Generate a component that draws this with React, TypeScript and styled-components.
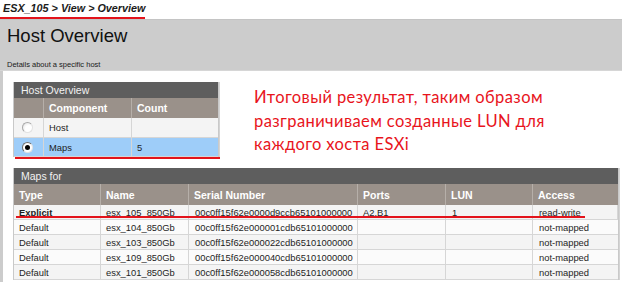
import React from 'react';
import styled, { createGlobalStyle } from 'styled-components';

const Global = createGlobalStyle`
  html, body { margin: 0; padding: 0; background: #ffffff; }
  body {
    width: 622px; height: 282px; overflow: hidden;
    font-family: "Liberation Sans", Arial, Helvetica, sans-serif;
  }
  * { box-sizing: border-box; }
`;

const Page = styled.div`
  width: 622px;
  height: 282px;
  display: flex;
  flex-direction: column;
  overflow: hidden;
`;

const Breadcrumb = styled.div`
  position: relative;
  height: 19px;
  padding: 2px 0 0 3px;
  font-size: 10.8px;
  line-height: 12px;
  font-weight: bold;
  font-style: italic;
  color: #1c1c1c;
`;

const RedMark = styled.div<{ $left: number; $top: number; $width: number }>`
  position: absolute;
  left: ${(p) => p.$left}px;
  top: ${(p) => p.$top}px;
  width: ${(p) => p.$width}px;
  height: 2px;
  background: #e3131b;
  pointer-events: none;
`;

const HeaderBand = styled.div`
  height: 52px;
  background: #cccccc;
  border-top: 1px solid #c4c4c4;
  border-bottom: 1px solid #d6d6d6;
  padding: 6px 0 0 7px;
`;

const PageTitle = styled.h1`
  margin: 0;
  font-size: 18.5px;
  line-height: 20px;
  font-weight: normal;
  color: #111111;
`;

const PageSubtitle = styled.div`
  margin-top: 14px;
  font-size: 7.5px;
  line-height: 9px;
  color: #1a1a1a;
`;

const Content = styled.div`
  flex: 1;
  border-left: 3px solid #cccccc;
  padding: 11px 0 0 10px;
  display: flex;
  flex-direction: column;
`;

const TopRow = styled.div`
  display: flex;
  align-items: flex-start;
`;

const PanelBox = styled.div<{ $width: number }>`
  width: ${(p) => p.$width}px;
  display: flex;
  flex-direction: column;
`;

const Panel = styled.div`
  box-shadow: 1px 0 0 #d4d4d4;
  border-left: 1px solid #c9c9c9;
  border-right: 1px solid #c9c9c9;
`;

const PanelTitle = styled.div`
  height: 16px;
  line-height: 16px;
  padding-left: 7px;
  background: #5e5e5e;
  color: #f2f2f2;
  font-size: 10.5px;
`;

const Row = styled.div<{ $cols: string; $height: number; $bg: string }>`
  position: relative;
  display: grid;
  grid-template-columns: ${(p) => p.$cols};
  height: ${(p) => p.$height}px;
  background: ${(p) => p.$bg};
`;

const HeadCell = styled.div`
  display: flex;
  align-items: center;
  padding-left: 5px;
  color: #ffffff;
  font-weight: bold;
  font-size: 10.5px;
  border-right: 1px solid #b6afa9;
  white-space: nowrap;
  &:last-child { border-right: none; }
`;

const Cell = styled.div<{ $bold?: boolean; $pad?: number }>`
  display: flex;
  align-items: center;
  padding-left: ${(p) => p.$pad ?? 5}px;
  font-size: 9.4px;
  font-weight: ${(p) => (p.$bold ? 'bold' : 'normal')};
  color: #1e1e1e;
  border-right: 1px solid #d6d6d6;
  border-bottom: 1px solid #d6d6d6;
  white-space: nowrap;
  overflow: hidden;
  &:last-child { border-right: none; }
`;

const RadioCell = styled.div`
  display: flex;
  align-items: center;
  padding-left: 8px;
  border-right: 1px solid #d6d6d6;
  border-bottom: 1px solid #d6d6d6;
`;

const Radio = styled.span<{ $checked?: boolean }>`
  position: relative;
  width: 11px;
  height: 11px;
  border-radius: 50%;
  border: 1px solid ${(p) => (p.$checked ? '#6d6d6d' : '#a8a8a8')};
  border-right-color: #e2e2e2;
  border-bottom-color: #e2e2e2;
  background: ${(p) => (p.$checked ? '#ffffff' : 'radial-gradient(circle at 65% 65%, #ffffff 40%, #dedede 100%)')};
  &::after {
    content: '';
    display: ${(p) => (p.$checked ? 'block' : 'none')};
    position: absolute;
    left: 2px;
    top: 2px;
    width: 5px;
    height: 5px;
    border-radius: 50%;
    background: #000000;
  }
`;

const HeaderRowBg = '#9a918a';

const Underline = styled.div`
  margin-left: 2px;
  width: 205px;
  height: 2px;
  background: #e3131b;
`;

const Note = styled.div`
  margin: 4px 0 0 35px;
  font-family: Lato, "Open Sans", sans-serif;
  font-size: 16.5px;
  letter-spacing: 0.4px;
  line-height: 23.5px;
  color: #e8141c;
  white-space: nowrap;
`;

const MapsBox = styled.div`
  margin-top: 9px;
  width: 606px;
`;

const hostCols = '30px 88px 1fr';
const mapsCols = '87px 88px 169px 88px 87px 1fr';

const maps = [
  { type: 'Explicit', name: 'esx_105_850Gb', serial: '00c0ff15f62e0000d9ccb65101000000', ports: 'A2,B1', lun: '1', access: 'read-write' },
  { type: 'Default', name: 'esx_104_850Gb', serial: '00c0ff15f62e000001cdb65101000000', ports: '', lun: '', access: 'not-mapped' },
  { type: 'Default', name: 'esx_103_850Gb', serial: '00c0ff15f62e000022cdb65101000000', ports: '', lun: '', access: 'not-mapped' },
  { type: 'Default', name: 'esx_109_850Gb', serial: '00c0ff15f62e000040cdb65101000000', ports: '', lun: '', access: 'not-mapped' },
  { type: 'Default', name: 'esx_101_850Gb', serial: '00c0ff15f62e000058cdb65101000000', ports: '', lun: '', access: 'not-mapped' },
];

export default function App() {
  return (
    <Page>
      <Global />
      <Breadcrumb>
        ESX_105 &gt; View &gt; Overview
        <RedMark $left={0} $top={17} $width={145} />
      </Breadcrumb>
      <HeaderBand>
        <PageTitle>Host Overview</PageTitle>
        <PageSubtitle>Details about a specific host</PageSubtitle>
      </HeaderBand>
      <Content>
        <TopRow>
          <PanelBox $width={206}>
            <Panel>
              <PanelTitle>Host Overview</PanelTitle>
              <Row $cols={hostCols} $height={20} $bg={HeaderRowBg}>
                <HeadCell />
                <HeadCell>Component</HeadCell>
                <HeadCell>Count</HeadCell>
              </Row>
              <Row $cols={hostCols} $height={20} $bg="#f4f4f4">
                <RadioCell><Radio /></RadioCell>
                <Cell>Host</Cell>
                <Cell />
              </Row>
              <Row $cols={hostCols} $height={19} $bg="#9ecdf9">
                <RadioCell><Radio $checked /></RadioCell>
                <Cell>Maps</Cell>
                <Cell>5</Cell>
              </Row>
            </Panel>
            <Underline />
          </PanelBox>
          <Note>
            Итоговый результат, таким образом
            <br />
            разграничиваем созданные LUN для
            <br />
            каждого хоста ESXi
          </Note>
        </TopRow>
        <MapsBox>
          <Panel>
            <PanelTitle>Maps for</PanelTitle>
            <Row $cols={mapsCols} $height={21} $bg={HeaderRowBg}>
              <HeadCell>Type</HeadCell>
              <HeadCell>Name</HeadCell>
              <HeadCell>Serial Number</HeadCell>
              <HeadCell>Ports</HeadCell>
              <HeadCell>LUN</HeadCell>
              <HeadCell>Access</HeadCell>
            </Row>
            {maps.map((m, i) => (
              <Row key={m.name} $cols={mapsCols} $height={15} $bg={i % 2 === 0 ? '#f4f4f4' : '#fbfbfb'}>
                <Cell $bold={m.type === 'Explicit'}>{m.type}</Cell>
                <Cell>{m.name}</Cell>
                <Cell $pad={6}>{m.serial}</Cell>
                <Cell>{m.ports}</Cell>
                <Cell $pad={6}>{m.lun}</Cell>
                <Cell $pad={6}>{m.access}</Cell>
                {i === 0 && <RedMark $left={2} $top={10.5} $width={569} />}
              </Row>
            ))}
          </Panel>
        </MapsBox>
      </Content>
    </Page>
  );
}
